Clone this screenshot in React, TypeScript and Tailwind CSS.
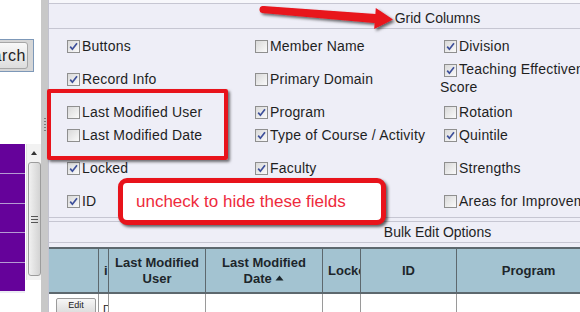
import React from 'react';

type Field = { label: string; checked: boolean; wrap?: boolean };

type Row = { h: string; cells: (Field | null)[] };

const rows: Row[] = [
  {
    h: 'h-[33px]',
    cells: [
      { label: 'Buttons', checked: true },
      { label: 'Member Name', checked: false },
      { label: 'Division', checked: true },
    ],
  },
  {
    h: 'h-[33px]',
    cells: [
      { label: 'Record Info', checked: true },
      { label: 'Primary Domain', checked: false },
      { label: 'Teaching Effectiveness Score', checked: true, wrap: true },
    ],
  },
  {
    h: 'h-[23px]',
    cells: [
      { label: 'Last Modified User', checked: false },
      { label: 'Program', checked: true },
      { label: 'Rotation', checked: false },
    ],
  },
  {
    h: 'h-[33px]',
    cells: [
      { label: 'Last Modified Date', checked: false },
      { label: 'Type of Course / Activity', checked: true },
      { label: 'Quintile', checked: true },
    ],
  },
  {
    h: 'h-[33px]',
    cells: [
      { label: 'Locked', checked: true },
      { label: 'Faculty', checked: true },
      { label: 'Strengths', checked: false },
    ],
  },
  {
    h: 'h-[20px]',
    cells: [
      { label: 'ID', checked: true },
      null,
      { label: 'Areas for Improvement', checked: false },
    ],
  },
];

const cellWidths = ['w-[188px]', 'w-[189px]', 'w-[180px]'];

function CheckBox({ checked }: { checked: boolean }) {
  return (
    <span className="ml-[4px] mr-[2px] inline-flex h-[13px] w-[13px] shrink-0 items-center justify-center border border-[#8f8f8f] bg-gradient-to-br from-[#d9d9d9] to-[#fafafa] align-[-2px]">
      {checked ? (
        <svg width="11" height="11" viewBox="0 0 11 11" aria-hidden="true">
          <path d="M2.2 5.6 L4.4 8.2 L9 2.2" fill="none" stroke="#3d4f9a" strokeWidth="1.7" />
        </svg>
      ) : null}
    </span>
  );
}

function FieldCell({ field }: { field: Field }) {
  if (field.wrap) {
    return (
      <div className="-mt-[9px] leading-[18px] tracking-[0.2px]">
        <CheckBox checked={field.checked} />
        {field.label}
      </div>
    );
  }
  return (
    <div className="flex h-[20px] items-center whitespace-nowrap tracking-[0.2px]">
      <CheckBox checked={field.checked} />
      <span>{field.label}</span>
    </div>
  );
}

function LeftPanel() {
  return (
    <div className="flex w-[41px] shrink-0 flex-col overflow-hidden bg-white">
      <div className="h-[39px]" />
      <div className="-ml-[22px] flex h-[33px] w-[56px] items-center border border-[#7d98b8] bg-[#d6d6d6] pr-[5px]">
        <div className="flex h-[27px] w-full items-center justify-end rounded-[3px] border border-[#a6a6a6] bg-gradient-to-b from-[#f8f8f8] to-[#dddddd] pr-[1px] text-[16px] tracking-[0.6px] text-[#222]">
          Search
        </div>
      </div>
      <div className="h-[72px]" />
      <div className="flex">
        <div className="flex w-[25px] flex-col">
          <div className="h-[30px] border-b border-[#b59bd3] bg-[#65029a]" />
          <div className="h-[30px] border-b border-[#b59bd3] bg-[#65029a]" />
          <div className="h-[29px] border-b border-[#b59bd3] bg-[#65029a]" />
          <div className="h-[30px] border-b border-[#b59bd3] bg-[#65029a]" />
          <div className="h-[28px] bg-[#65029a]" />
          <div className="h-[2px] bg-[#ececf4]" />
        </div>
        <div className="ml-[1px] flex h-[136px] w-[15px] flex-col items-center border-l border-[#e2e2e2] bg-[#f2f2f2]">
          <svg width="8" height="14" viewBox="0 0 8 14" className="mt-[2px]" aria-hidden="true">
            <path d="M1 9 L4 5 L7 9 Z" fill="#333" />
          </svg>
          <div className="mt-[2px] flex h-[114px] w-[13px] flex-col items-center justify-center gap-[2px] rounded-[3px] border border-[#9c9c9c] bg-gradient-to-r from-[#f1f1f1] to-[#d3d3d3]">
            <span className="h-px w-[7px] bg-[#555]" />
            <span className="h-px w-[7px] bg-[#555]" />
            <span className="h-px w-[7px] bg-[#555]" />
          </div>
        </div>
      </div>
    </div>
  );
}

function Splitter() {
  return (
    <div className="flex w-[7px] shrink-0 flex-col items-center bg-[#c8c8c8] pt-[118px]">
      <div className="flex flex-col gap-[2px]">
        {[0, 1, 2, 3, 4].map((i) => (
          <span key={i} className="h-px w-[2px] bg-[#7c7c7c]" />
        ))}
      </div>
    </div>
  );
}

const tableCols = [
  { w: 'w-[50px]', label: null, left: false },
  { w: 'w-[10px]', label: 'i', left: true },
  { w: 'w-[97px]', label: 'Last Modified User', left: false },
  { w: 'w-[117px]', label: 'date', left: false },
  { w: 'w-[38px]', label: 'Locked', left: true },
  { w: 'w-[96px]', label: 'ID', left: false },
  { w: 'w-[144px]', label: 'Program', left: false },
];

function GridTable() {
  return (
    <div className="border-t-2 border-[#5d686e]">
      <div className="flex h-[45px] border-b-2 border-[#5d686e] bg-[#a3c3d1]">
        {tableCols.map((col, i) => (
          <div
            key={i}
            className={`${col.w} flex shrink-0 items-center overflow-hidden border-r border-[#5d686e] text-[13px] font-bold leading-[16px] text-[#1d262b] ${
              col.left ? 'justify-start whitespace-nowrap pl-[5px]' : 'justify-center text-center'
            }`}
          >
            {col.label === 'date' ? (
              <span>
                Last Modified
                <br />
                Date{' '}
                <svg width="9" height="6" viewBox="0 0 9 6" className="inline-block align-[2px]" aria-hidden="true">
                  <path d="M0.5 5.5 L4.5 0.5 L8.5 5.5 Z" fill="#1d262b" />
                </svg>
              </span>
            ) : (
              col.label
            )}
          </div>
        ))}
        <div className="flex-1" />
      </div>
      <div className="flex h-[20px] bg-white">
        {tableCols.map((col, i) => (
          <div key={i} className={`${col.w} shrink-0 overflow-hidden border-r border-[#9a9a9a]`}>
            {i === 0 ? (
              <div className="ml-[7px] mt-[4px] flex h-[16px] w-[40px] items-start justify-center rounded-[2px] border border-[#9b9b9b] bg-gradient-to-b from-[#f7f7f7] to-[#dcdcdc] pt-[1px] text-[9px] leading-[10px] text-[#222]">
                Edit
              </div>
            ) : null}
            {i === 1 ? <div className="pl-[4px] pt-[9px] text-[11px] leading-[12px] text-[#222]">D</div> : null}
          </div>
        ))}
      </div>
    </div>
  );
}

function MainPanel() {
  return (
    <div className="min-w-0 flex-1 overflow-hidden border-l border-[#c2c2ce] bg-[#eeeef7]">
      <div className="w-[777px] text-[14px] text-[#1f1f1f]">
        <div className="h-[4px] border-b border-[#c6c6d2] bg-[#f7f7fb]" />
        <div className="h-[25px] border-b border-[#c6c6d2] pt-[4px] text-center leading-[20px]">Grid Columns</div>
        <div className="border-b border-[#c6c6d2] pb-[6px] pl-[14px] pt-[7px]">
          {rows.map((row, r) => (
            <div key={r} className={`${row.h} flex items-start`}>
              {row.cells.map((cell, c) => (
                <div key={c} className={`${cellWidths[c]} shrink-0`}>
                  {cell ? <FieldCell field={cell} /> : null}
                </div>
              ))}
            </div>
          ))}
        </div>
        <div className="h-[3px]" />
        <div className="h-[22px] border-y border-[#c6c6d2] text-center leading-[20px]">Bulk Edit Options</div>
        <div className="h-[4px]" />
        <GridTable />
      </div>
    </div>
  );
}

function Arrow() {
  return (
    <svg
      className="pointer-events-none absolute left-[250px] top-0"
      width="160"
      height="40"
      viewBox="0 0 160 40"
      aria-hidden="true"
    >
      <defs>
        <filter id="arrowShadow" x="-10%" y="-40%" width="130%" height="200%">
          <feDropShadow dx="2" dy="2" stdDeviation="1.4" floodColor="#000" floodOpacity="0.6" />
        </filter>
      </defs>
      <g filter="url(#arrowShadow)" fill="#e8131b">
        <circle cx="13" cy="9.5" r="3.5" />
        <polygon points="13.3,6 125.4,14 125.8,8 143,19.5 124.2,29 124.6,23 12.7,13" />
      </g>
    </svg>
  );
}

export default function App() {
  return (
    <div className="relative flex h-[312px] w-[580px] overflow-hidden bg-white font-['Liberation_Sans',Arial,sans-serif]">
      <LeftPanel />
      <Splitter />
      <MainPanel />

      <div className="pointer-events-none absolute left-[47px] top-[89px] h-[71px] w-[181px] rounded-[2px] border-4 border-[#e8131b] shadow-[2px_2px_3px_rgba(0,0,0,0.55)]" />

      <div className="absolute left-[118px] top-[178px] flex h-[47px] w-[268px] items-center rounded-[9px] border-[5px] border-[#e8131b] bg-white pl-[13px] text-[17px] text-[#ee2a3c] shadow-[2px_2px_3px_rgba(0,0,0,0.6)]">
        uncheck to hide these fields
      </div>

      <Arrow />
    </div>
  );
}
